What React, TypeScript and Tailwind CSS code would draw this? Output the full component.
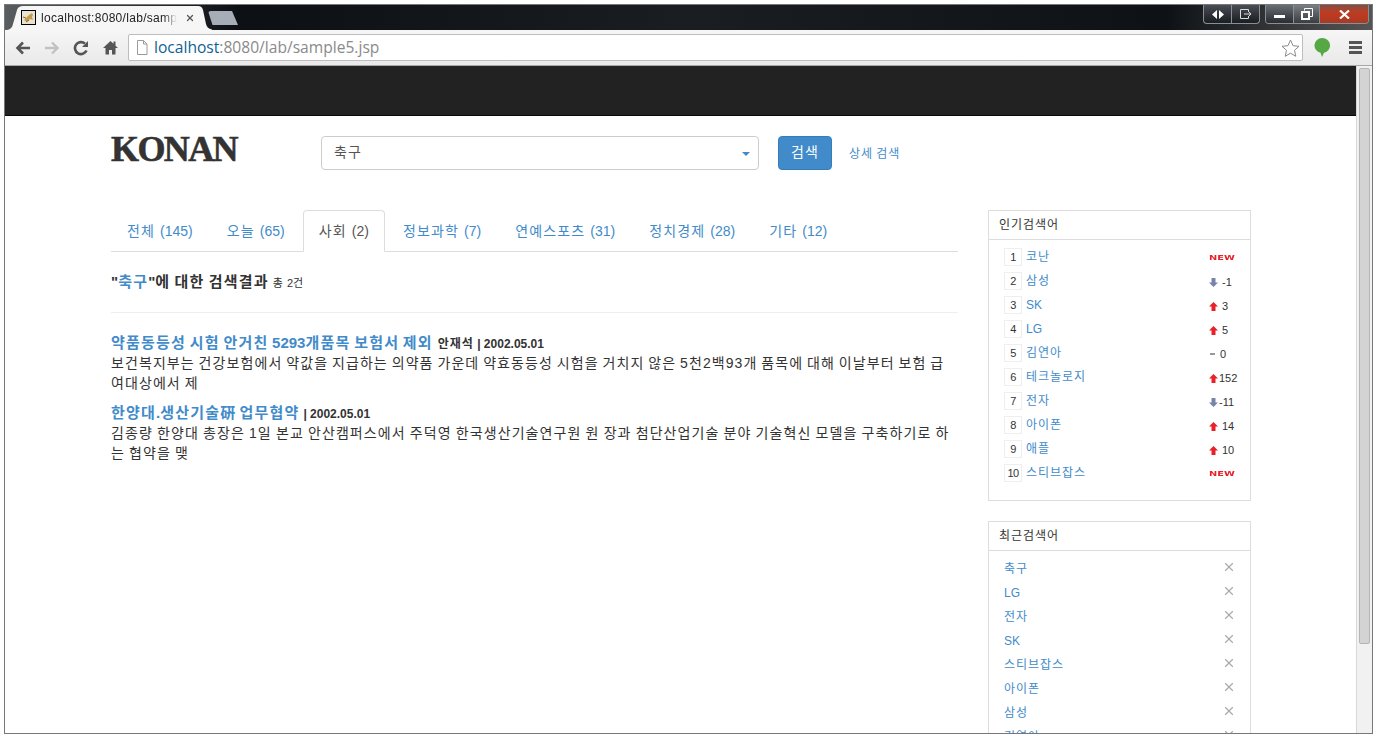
import { X } from "lucide-react";

const font = "font-['Liberation_Sans','Noto_Sans_CJK_KR',sans-serif]";

const tabs = [
  { label: "전체", count: 145 },
  { label: "오늘", count: 65 },
  { label: "사회", count: 2, active: true },
  { label: "정보과학", count: 7 },
  { label: "연예스포츠", count: 31 },
  { label: "정치경제", count: 28 },
  { label: "기타", count: 12 },
];

const popular = [
  { word: "코난", state: "new" },
  { word: "삼성", state: "down", value: "-1" },
  { word: "SK", state: "up", value: "3" },
  { word: "LG", state: "up", value: "5" },
  { word: "김연아", state: "same", value: "0" },
  { word: "테크놀로지", state: "up", value: "152" },
  { word: "전자", state: "down", value: "-11" },
  { word: "아이폰", state: "up", value: "14" },
  { word: "애플", state: "up", value: "10" },
  { word: "스티브잡스", state: "new" },
];

const recent = ["축구", "LG", "전자", "SK", "스티브잡스", "아이폰", "삼성", "김연아"];

// hangul runs get some tracking so each syllable takes a full em, like the original gulim
function K({ children }: { children: string }) {
  return (
    <>
      {children.split(/([\uac00-\ud7a3\u7814]+)/).map((part, i) =>
        part ? (
          <span key={i} className={i % 2 ? "tracking-[0.08em]" : undefined}>
            {part}
          </span>
        ) : null,
      )}
    </>
  );
}

function Arrow({ up }: { up: boolean }) {
  return (
    <svg width="9" height="9" viewBox="0 0 9 9" className={up ? "fill-[#e8202a]" : "fill-[#7885a8]"}>
      <path d={up ? "M4.5 0 9 4.5H6.5V9h-4V4.5H0z" : "M2.5 0h4v4.5H9L4.5 9 0 4.5h2.5z"} />
    </svg>
  );
}

function Change({ state, value }: { state: string; value?: string }) {
  if (state === "new") {
    return (
      <span className="origin-left scale-x-[1.4] font-['DejaVu_Sans',sans-serif] text-[7px] leading-none font-black text-[#e8202a]">
        NEW
      </span>
    );
  }
  const narrow = value === "152" || value === "-11";
  return (
    <span className="flex items-center text-[11px] leading-none text-[#333]">
      {state === "same" ? <span className="mx-[1px] h-[2px] w-[5px] bg-[#999]" /> : <Arrow up={state === "up"} />}
      <span className={narrow ? "ml-[1px]" : "ml-[4px]"}>{value}</span>
    </span>
  );
}

function PopularPanel() {
  return (
    <div className="h-[291px] w-[263px] border border-[#ddd] bg-white">
      <div className="flex h-[29px] items-center border-b border-[#ddd] px-[10px] text-[12px] text-[#333]">
        <K>인기검색어</K>
      </div>
      <ul className="flex flex-col gap-[6px] pt-[8px] pl-[15px]">
        {popular.map((item, i) => (
          <li key={item.word} className="flex h-[18px] items-center">
            <span className="flex h-[18px] w-[18px] items-center justify-center border border-[#eee] text-[11px] tracking-[-0.5px] text-[#333]">
              {i + 1}
            </span>
            <a className="ml-[4px] text-[12px] text-[#428bca]">
              <K>{item.word}</K>
            </a>
            <span className="mr-[9px] ml-auto flex w-[32px] translate-y-[1px]">
              <Change state={item.state} value={item.value} />
            </span>
          </li>
        ))}
      </ul>
    </div>
  );
}

function RecentPanel() {
  return (
    <div className="mt-[20px] w-[263px] border border-[#ddd] bg-white">
      <div className="flex h-[29px] items-center border-b border-[#ddd] px-[10px] text-[12px] text-[#333]">
        <K>최근검색어</K>
      </div>
      <ul className="flex flex-col gap-[6px] pt-[8px] pr-[14px] pl-[15px]">
        {recent.map((word) => (
          <li key={word} className="flex h-[18px] items-center justify-between">
            <a className="translate-y-px text-[12px] text-[#428bca]">
              <K>{word}</K>
            </a>
            <X size={14} strokeWidth={2} className="-translate-y-px text-[#aaa]" />
          </li>
        ))}
      </ul>
    </div>
  );
}

function Results() {
  return (
    <div className="w-[847px]">
      <ul className="flex h-[42px] border-b border-[#ddd] text-[14px] [word-spacing:1.2px]">
        {tabs.map((tab) =>
          tab.active ? (
            <li key={tab.label} className="-mb-px mr-[2px] flex h-[42px] items-center rounded-t-[4px] border border-[#ddd] border-b-white bg-white px-[15px] pt-[1px] text-[#555]">
              <span>
                <K>{`${tab.label} (${tab.count})`}</K>
              </span>
            </li>
          ) : (
            <li key={tab.label} className="mr-[2px] flex items-center border border-transparent px-[15px] pt-[1px] text-[#428bca]">
              <span>
                <K>{`${tab.label} (${tab.count})`}</K>
              </span>
            </li>
          ),
        )}
      </ul>
      <h4 className="mt-[20px] h-[41px] border-b border-[#eee] text-[15px] leading-[20px] font-bold text-[#333]">
        <K>"</K>
        <span className="text-[#428bca]"><K>축구</K></span>
        <K>"에 대한 검색결과 </K>
        <small className="text-[11px] font-normal"><K>총 2건</K></small>
      </h4>
      <div className="mt-[20px] text-[14px] leading-[20px] text-[#333]">
        <div>
          <div className="flex h-[20px] items-baseline whitespace-nowrap">
            <a className="text-[15px] font-bold text-[#428bca] [word-spacing:-0.5px]"><K>약품동등성 시험 안거친 5293개품목 보험서 제외</K></a>
            <span className="ml-[5px] text-[12px] font-bold"><K>안재석 | 2002.05.01</K></span>
          </div>
          <p className="tracking-[1.08px] [word-spacing:-1.11px]">
            보건복지부는 건강보험에서 약값을 지급하는 의약품 가운데 약효동등성 시험을 거치지 않은 5천2백93개 품목에 대해 이날부터 보험 급여대상에서 제
          </p>
        </div>
        <div className="mt-[10px]">
          <div className="flex h-[20px] items-baseline whitespace-nowrap">
            <a className="text-[15px] font-bold text-[#428bca]"><K>한양대.생산기술硏 업무협약</K></a>
            <span className="ml-[4px] text-[12px] font-bold">| 2002.05.01</span>
          </div>
          <p className="tracking-[1.08px] [word-spacing:-0.85px]">
            김종량 한양대 총장은 1일 본교 안산캠퍼스에서 주덕영 한국생산기술연구원 원 장과 첨단산업기술 분야 기술혁신 모델을 구축하기로 하는 협약을 맺
          </p>
        </div>
      </div>
    </div>
  );
}

function Page() {
  return (
    <div className="min-w-0 flex-1 overflow-hidden bg-white">
      <div className="h-[50px] border-b border-[#080808] bg-[#222]" />
      <div className="pl-[106px]">
        <div className="flex h-[94px] pt-[20px]">
          <div className="w-[210px] font-['Liberation_Serif',serif] text-[36px] leading-[26px] font-bold tracking-[-1.6px] text-[#333] [-webkit-text-stroke:0.6px_#333]">KONAN</div>
          <div className="relative flex h-[34px] w-[438px] items-center rounded-[4px] border border-[#ccc] pb-[2px] pl-[12px] text-[14px] text-[#555]">
            <K>축구</K>
            <span className="absolute top-[15px] right-[8px] border-x-[4px] border-t-[4px] border-x-transparent border-t-[#428bca]" />
          </div>
          <button className="ml-[19px] h-[34px] w-[54px] rounded-[4px] border border-[#357ebd] bg-[#428bca] pb-[2px] text-[14px] text-white">
            <K>검색</K>
          </button>
          <a className="mt-[9px] ml-[17px] text-[12px] text-[#428bca]">
            <K>상세 검색</K>
          </a>
        </div>
        <div className="flex">
          <Results />
          <div className="ml-[30px] shrink-0">
            <PopularPanel />
            <RecentPanel />
          </div>
        </div>
      </div>
    </div>
  );
}

function Scrollbar() {
  return (
    <div className="w-[16px] shrink-0 border-l border-[#d8d8d8] bg-[#f1f1f1] px-[2px] pt-[2px]">
      <div className="h-[576px] rounded-[2px] border border-[#b5b5b5] bg-[#d3d3d3]" />
    </div>
  );
}

function WindowButtons() {
  return (
    <div className="ml-auto flex h-[19px] items-start gap-[5px] pr-[3px]">
      <div className="flex h-[19px] overflow-hidden rounded-b-[4px] border border-t-0 border-[#8a8f96] bg-gradient-to-b from-[#4a4f55] to-[#1a1d22]">
        <span className="flex w-[28px] items-center justify-center border-r border-[#8a8f96]">
          <svg width="12" height="9" viewBox="0 0 12 9" className="fill-white"><path d="M5 0v9L0 4.5zM7 0v9l5-4.5z" /></svg>
        </span>
        <span className="flex w-[27px] items-center justify-center">
          <svg width="12" height="10" viewBox="0 0 12 10" className="fill-none stroke-[#ddd]"><path d="M8.5 3V.5h-8v9h8V7M4 5h7M9 3l2 2-2 2" /></svg>
        </span>
      </div>
      <div className="flex h-[19px] overflow-hidden rounded-b-[4px] border border-t-0 border-[#8a8f96]">
        <span className="flex w-[28px] items-end justify-center border-r border-[#8a8f96] bg-gradient-to-b from-[#6a6f75] to-[#2a2d32] pb-[5px]">
          <span className="h-[3px] w-[11px] bg-white" />
        </span>
        <span className="flex w-[26px] items-center justify-center border-r border-[#8a8f96] bg-gradient-to-b from-[#7a7f85] to-[#3a3d42]">
          <svg width="12" height="12" viewBox="0 0 12 12" className="fill-none stroke-white"><path strokeWidth="2" d="M1 4h7v7H1z" /><path d="M3.5 2.5V.5h8v8H9" /></svg>
        </span>
        <span className="flex w-[48px] items-center justify-center bg-gradient-to-b from-[#8a4a3c] via-[#c0391f] to-[#a83a24]">
          <svg width="11" height="9" viewBox="0 0 11 9" className="stroke-white"><path strokeWidth="2.2" d="M1 .5 10 8.5M10 .5 1 8.5" /></svg>
        </span>
      </div>
    </div>
  );
}

function TabStrip() {
  return (
    <div className="flex h-[25px] shrink-0 bg-[linear-gradient(to_right,#5a5d60_0%,#0c1014_17%,#1a1e23_50%,#0e1216_85%,#555_100%)]">
      <div className="relative flex h-[25px] w-[207px] items-center pl-[16px]">
        <svg className="absolute inset-0" width="207" height="25" viewBox="0 0 207 25">
          <path d="M0 25c5 0 7-2 8-6l4-14c1-3 3-4 6-4h175c3 0 4 1 5 4l3 14c1 4 4 6 10 6z" fill="#f6f6f6" />
        </svg>
        <svg className="relative shrink-0 border border-black bg-[#e8e2d0]" width="15" height="15" viewBox="0 0 13 13">
          <path d="M2 9l3-3 2-2 3-2 1 2-1 2 1 3-3-1-3 3z" fill="#c89a4a" />
          <path d="M1 6l3 1M4 11l3-2" stroke="#7a6a3a" />
        </svg>
        <span className="relative ml-[5px] w-[136px] text-[12px] leading-[16px] tracking-[0.3px] whitespace-nowrap text-[#222] [mask-image:linear-gradient(to_right,black_90%,transparent)]">
          localhost:8080/lab/sampl
        </span>
        <X size={10} strokeWidth={3} className="relative ml-[8px] text-[#555]" />
      </div>
      <div className="mt-[6px] -ml-[4px] h-[14px] w-[30px] rounded-t-[3px] bg-[#a6adb6] [clip-path:polygon(0_0,80%_0,100%_100%,15%_100%)]" />
      <WindowButtons />
    </div>
  );
}

function Toolbar() {
  return (
    <div className="flex h-[36px] shrink-0 items-center border-b border-[#a8a8a8] bg-gradient-to-b from-[#f6f6f6] to-[#e9e9e9] pl-[10px]">
      <svg width="16" height="14" viewBox="0 0 16 14" className="fill-none stroke-[#555]" strokeWidth="2.6"><path d="M15 7H3M8 1.5 2.5 7 8 12.5" /></svg>
      <svg width="16" height="14" viewBox="0 0 16 14" className="ml-[13px] fill-none stroke-[#c2c2c2]" strokeWidth="2.4"><path d="M1 7h12M8 1.5 13.5 7 8 12.5" /></svg>
      <svg width="16" height="16" viewBox="0 0 16 16" className="ml-[13px] fill-none stroke-[#555]" strokeWidth="2.6"><path d="M13.5 10.5A6 6 0 1 1 12 3.6" /><path d="M15 1v6H9z" fill="#555" stroke="none" /></svg>
      <svg width="15" height="15" viewBox="0 0 15 15" className="ml-[14px] fill-[#555]"><path d="M7.5 1 0 8h2.5v6.5h3.5V10h3v4.500h3.500V8H15l-2.500-2.300V1.500h-2v2.300z" /></svg>
      <div className="ml-[10px] flex h-[27px] w-[1175px] items-center rounded-[2px] border border-[#bdbdbd] bg-white pl-[7px]">
        <svg width="12" height="15" viewBox="0 0 12 15" className="fill-white stroke-[#9a9a9a]"><path d="M1.500 .5h6l3.500 3.500v10.500h-9.500zM7.500 .5V4H11" /></svg>
        <span className="ml-[6px] font-['Open_Sans',sans-serif] text-[15.6px] leading-none text-[#0f5f95]">
          localhost<span className="text-[#8a8a8a]">:8080/lab/sample5.jsp</span>
        </span>
        <svg width="19" height="18" viewBox="0 0 19 18" className="mr-[2px] ml-auto fill-white stroke-[#8a8a8a]"><path d="m9.500 1 2.500 5.700 6 .6-4.500 4 1.300 6-5.300-3.100-5.300 3.100 1.300-6-4.500-4 6-.6z" /></svg>
      </div>
      <svg width="16" height="19" viewBox="0 0 16 19" className="ml-[11px] fill-[#55a843]"><path d="M8 0a7.800 7.500 0 0 1 2 14.800L8 19l-1.500-4.200A7.800 7.500 0 0 1 8 0z" /></svg>
      <div className="ml-[19px] flex w-[13px] flex-col gap-[2px]">
        <span className="h-[3px] bg-[#555]" />
        <span className="h-[3px] bg-[#555]" />
        <span className="h-[3px] bg-[#555]" />
      </div>
    </div>
  );
}

export default function App() {
  return (
    <div className={`h-[742px] w-[1378px] overflow-hidden bg-white pt-[4px] pl-[4px] ${font}`}>
      <div className="flex h-[730px] w-[1369px] flex-col overflow-hidden border border-[#777]">
        <TabStrip />
        <Toolbar />
        <div className="flex min-h-0 flex-1">
          <Page />
          <Scrollbar />
        </div>
      </div>
    </div>
  );
}
